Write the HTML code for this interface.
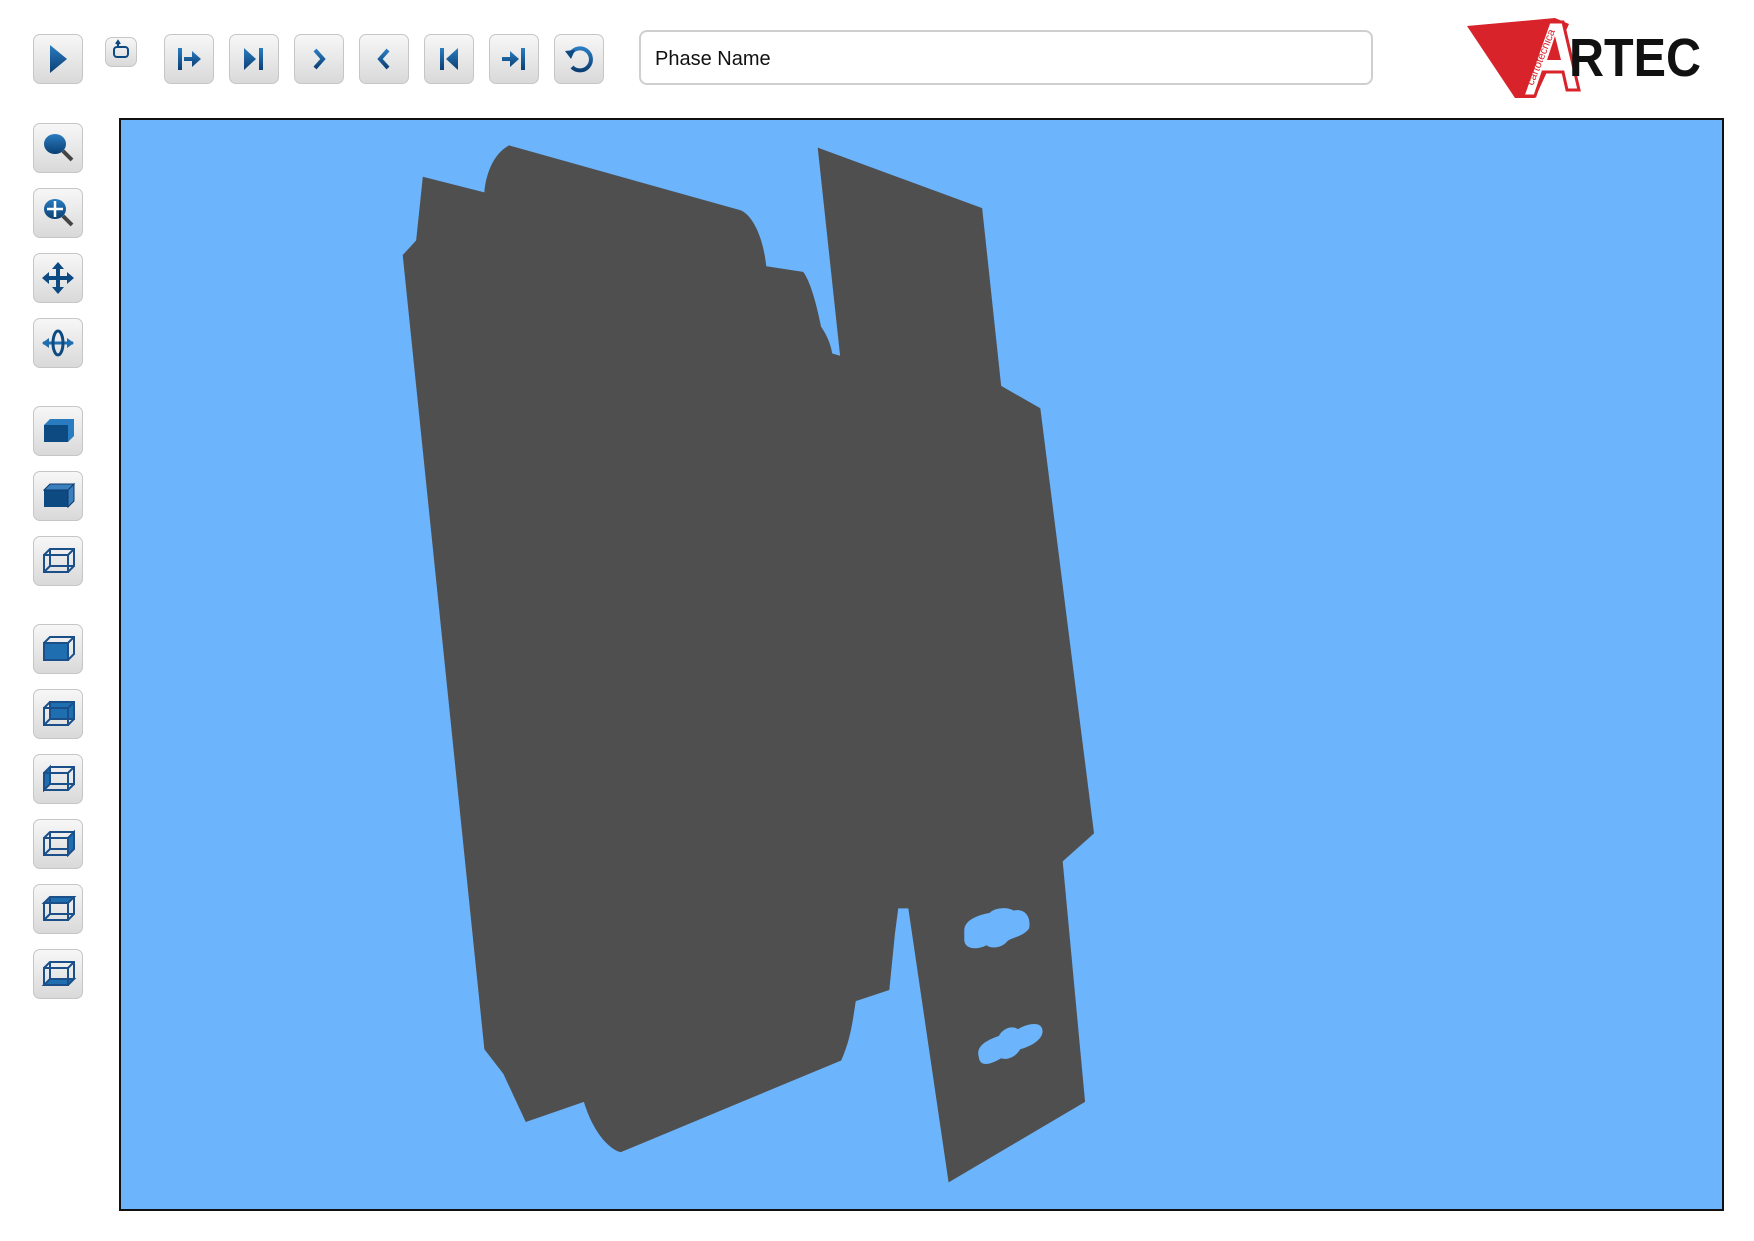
<!DOCTYPE html>
<html><head><meta charset="utf-8"><style>
body{margin:0;width:1754px;height:1241px;background:#fff;position:relative;overflow:hidden;font-family:"Liberation Sans",sans-serif}
.b{position:absolute;width:48px;height:48px;border:1px solid #c6c6c6;border-radius:7px;background:linear-gradient(#f7f7f7,#d9d9d9);box-sizing:content-box}
.b svg{position:absolute;left:0;top:0;width:48px;height:48px}
#vp{position:absolute;left:119px;top:118px;width:1601px;height:1089px;border:2px solid #111;background:#6cb4fb}
#inp{position:absolute;left:639px;top:30px;width:734px;height:55px;border:2px solid #cfcfcf;border-radius:8px;box-sizing:border-box;font-size:20px;line-height:55px;padding-left:14px;color:#111}
</style></head><body>
<svg width="0" height="0" style="position:absolute"><defs><linearGradient id="g" x1="0" y1="0" x2="0" y2="1"><stop offset="0" stop-color="#2a7cc0"/><stop offset="1" stop-color="#0b3f73"/></linearGradient></defs></svg>

<div class="b" style="left:33px;top:34px"><svg viewBox="0 0 48 48"><path d="M16 10L33 24 16 38Z" fill="url(#g)"/></svg></div>
<div class="b" style="left:105px;top:37px;width:30px;height:28px"><svg viewBox="0 0 30 28" style="width:30px;height:28px"><rect x="8" y="9" width="14" height="10" rx="3" fill="none" stroke="#0d4a82" stroke-width="2"/><path d="M12 9V4M10 6l2-3 2 3" stroke="#0d4a82" stroke-width="2" fill="none"/></svg></div>
<div class="b" style="left:164px;top:34px"><svg viewBox="0 0 48 48"><rect x="13" y="13" width="4" height="22" fill="url(#g)"/><path d="M19 22h8v-6l9 8-9 8v-6h-8z" fill="url(#g)"/></svg></div>
<div class="b" style="left:229px;top:34px"><svg viewBox="0 0 48 48"><path d="M14 13L26 24 14 35Z" fill="url(#g)"/><rect x="29" y="13" width="4" height="22" fill="url(#g)"/></svg></div>
<div class="b" style="left:294px;top:34px"><svg viewBox="0 0 48 48"><path d="M20 15l8 9-8 9" stroke="url(#g)" stroke-width="4" fill="none"/></svg></div>
<div class="b" style="left:359px;top:34px"><svg viewBox="0 0 48 48"><path d="M28 15l-8 9 8 9" stroke="url(#g)" stroke-width="4" fill="none"/></svg></div>
<div class="b" style="left:424px;top:34px"><svg viewBox="0 0 48 48"><rect x="15" y="13" width="4" height="22" fill="url(#g)"/><path d="M33 13L21 24 33 35Z" fill="url(#g)"/></svg></div>
<div class="b" style="left:489px;top:34px"><svg viewBox="0 0 48 48"><path d="M12 22h8v-6l9 8-9 8v-6h-8z" fill="url(#g)"/><rect x="31" y="13" width="4" height="22" fill="url(#g)"/></svg></div>
<div class="b" style="left:554px;top:34px"><svg viewBox="0 0 48 48"><path d="M17 32A11 11 0 1 0 16 18" stroke="url(#g)" stroke-width="4" fill="none"/><path d="M10 16l10-1-4 9z" fill="#0d4a82"/></svg></div>

<div id="inp">Phase Name</div>

<svg style="position:absolute;left:1465px;top:16px" width="240" height="84" viewBox="0 0 240 84">
<path d="M2 10L90 2 104 8 70 82 50 82Z" fill="#d8232a"/>
<path d="M58 80L84 6 98 6 114 74 102 74 98 56 78 56 70 80Z" fill="#fff" stroke="#d8232a" stroke-width="3"/>
<path d="M82 44L90 20 96 44Z" fill="#d8232a"/>
<text x="104" y="60" font-family="Liberation Sans" font-weight="bold" font-size="54" fill="#111" textLength="132" lengthAdjust="spacingAndGlyphs">RTEC</text>
<text transform="translate(68,70) rotate(-68)" font-family="Liberation Sans" font-size="11" fill="#d8232a">cartotecnica</text>
</svg>

<div class="b" style="left:33px;top:123px"><svg viewBox="0 0 48 48"><ellipse cx="21" cy="20" rx="11" ry="10" fill="url(#g)"/><path d="M29 27l9 9" stroke="#444" stroke-width="4"/></svg></div>
<div class="b" style="left:33px;top:188px"><svg viewBox="0 0 48 48"><ellipse cx="21" cy="20" rx="11" ry="10" fill="url(#g)"/><path d="M29 27l9 9" stroke="#444" stroke-width="4"/><path d="M21 12v16M13 20h16" stroke="#fff" stroke-width="2.5"/></svg></div>
<div class="b" style="left:33px;top:253px"><svg viewBox="0 0 48 48"><path d="M24 10v28M10 24h28" stroke="#0d4a82" stroke-width="4"/><path d="M24 8l-6 7h12zM24 40l-6-7h12zM8 24l7-6v12zM40 24l-7-6v12z" fill="#0d4a82"/></svg></div>
<div class="b" style="left:33px;top:318px"><svg viewBox="0 0 48 48"><path d="M9 24h30" stroke="#1f6fb0" stroke-width="3"/><path d="M40 24l-7-5v10zM8 24l7-5v10z" fill="#1f6fb0"/><ellipse cx="24" cy="24" rx="5" ry="12" fill="none" stroke="#0d4a82" stroke-width="3"/></svg></div>

<div class="b" style="left:33px;top:406px"><svg viewBox="0 0 48 48"><path d="M10 18h24v17H10z" fill="#0d4a82"/><path d="M10 18l6-6h24l-6 6zM34 18l6-6v17l-6 6z" fill="#2a7cc0"/></svg></div>
<div class="b" style="left:33px;top:471px"><svg viewBox="0 0 48 48"><path d="M10 18h24v17H10z" fill="#0d4a82"/><path d="M10 18l6-6h24l-6 6zM34 18l6-6v17l-6 6z" fill="#3a80bf" stroke="#0d3a6a"/></svg></div>
<div class="b" style="left:33px;top:536px"><svg viewBox="0 0 48 48" fill="none" stroke="#1a4f8a" stroke-width="2"><path d="M10 18h24v17H10zM10 18l6-6h24v17l-6 6M34 18l6-6M16 12v17h24M16 29l-6 6"/></svg></div>

<div class="b" style="left:33px;top:624px"><svg viewBox="0 0 48 48" fill="none" stroke="#1a4f8a" stroke-width="2"><path d="M10 18h24v17H10z" fill="#1f6fb0"/><path d="M10 18l6-6h24v17l-6 6M34 18l6-6"/></svg></div>
<div class="b" style="left:33px;top:689px"><svg viewBox="0 0 48 48" fill="none" stroke="#1a4f8a" stroke-width="2"><path d="M16 12h24v17H16z" fill="#1f6fb0"/><path d="M10 18h24v17H10zM10 18l6-6M34 18l6-6M34 35l6-6M10 35l6-6"/></svg></div>
<div class="b" style="left:33px;top:754px"><svg viewBox="0 0 48 48" fill="none" stroke="#1a4f8a" stroke-width="2"><path d="M10 18l6-6v17l-6 6z" fill="#1f6fb0"/><path d="M10 18h24v17H10zM16 12h24v17h-24M34 18l6-6M34 35l6-6"/></svg></div>
<div class="b" style="left:33px;top:819px"><svg viewBox="0 0 48 48" fill="none" stroke="#1a4f8a" stroke-width="2"><path d="M34 18l6-6v17l-6 6z" fill="#1f6fb0"/><path d="M10 18h24v17H10zM10 18l6-6h24M16 12v17h18M10 35l6-6"/></svg></div>
<div class="b" style="left:33px;top:884px"><svg viewBox="0 0 48 48" fill="none" stroke="#1a4f8a" stroke-width="2"><path d="M10 18l6-6h24l-6 6z" fill="#1f6fb0"/><path d="M10 18h24v17H10zM40 12v17l-6 6M16 12v17h24M10 35l6-6"/></svg></div>
<div class="b" style="left:33px;top:949px"><svg viewBox="0 0 48 48" fill="none" stroke="#1a4f8a" stroke-width="2"><path d="M10 35l6-6h24l-6 6z" fill="#1f6fb0"/><path d="M10 18h24v17H10zM10 18l6-6h24v17M34 18l6-6M16 12v17"/></svg></div>

<div id="vp"></div>
<svg style="position:absolute;left:0;top:0" width="1754" height="1241" viewBox="0 0 1568 1109.4">
<path fill-rule="evenodd" fill="#4f4f4f" d="M378 158L433 172C434 158 440 138 455 130L662 188C672 192 682 210 685 238L718 243C722 248 728 262 734 292C738 298 742 305 744 316L751 318L731 132L878 186L895 345L930 365L978 745L950 770L970 985L848 1057L812 812L803 812L800 835L795 885L765 895C762 915 760 930 752 948L555 1030C545 1028 530 1012 522 985L470 1003L450 960L433 938L360 228L372 215Z
M862 832C862 822 875 818 885 816C888 812 900 810 906 814C915 812 922 818 920 830C914 838 903 838 900 842C895 848 885 848 882 845C872 850 862 848 862 840Z
M875 945C872 935 882 930 893 926C896 920 904 916 910 920C918 915 932 912 932 922C932 930 920 936 912 938C908 945 900 948 895 946C885 952 876 954 875 945Z"/>
</svg>
</body></html>
